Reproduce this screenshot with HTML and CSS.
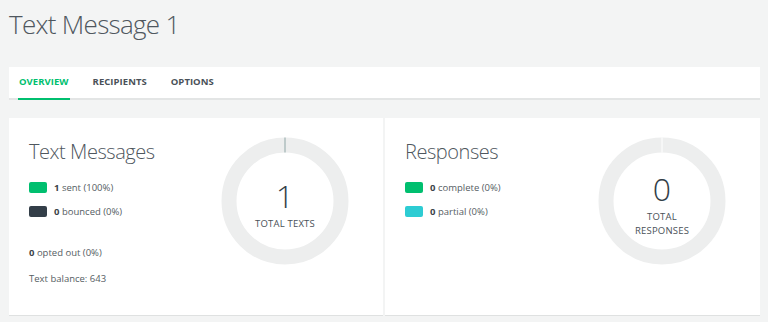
FILE: index.html
```html
<!DOCTYPE html>
<html>
<head>
<meta charset="utf-8">
<link rel="stylesheet" href="styles.css">
</head>
<body>
<div class="page">
  <h1 class="title">Text Message 1</h1>
  <nav class="tabs">
    <a class="tab active">OVERVIEW</a>
    <a class="tab">RECIPIENTS</a>
    <a class="tab">OPTIONS</a>
  </nav>
  <div class="cards">
    <section class="card">
      <div class="info">
        <h2 class="card-title">Text Messages</h2>
        <ul class="legend">
          <li><span class="swatch green"></span><b>1</b>&nbsp;sent (100%)</li>
          <li><span class="swatch dark"></span><b>0</b>&nbsp;bounced (0%)</li>
        </ul>
        <p class="stat"><b>0</b> opted out (0%)</p>
        <p class="stat">Text balance: 643</p>
      </div>
      <div class="donut">
        <svg width="128" height="128" viewBox="0 0 128 128">
          <circle cx="64" cy="64" r="56" fill="none" stroke="#edeeee" stroke-width="15"/>
          <line x1="64" y1="0.5" x2="64" y2="15.5" stroke="#8fa6a6" stroke-width="1"/>
        </svg>
        <div class="donut-label">
          <span class="num">1</span>
          <span class="cap">TOTAL TEXTS</span>
        </div>
      </div>
    </section>
    <section class="card">
      <div class="info">
        <h2 class="card-title">Responses</h2>
        <ul class="legend">
          <li><span class="swatch green"></span><b>0</b>&nbsp;complete (0%)</li>
          <li><span class="swatch teal"></span><b>0</b>&nbsp;partial (0%)</li>
        </ul>
      </div>
      <div class="donut">
        <svg width="128" height="128" viewBox="0 0 128 128">
          <circle cx="64" cy="64" r="56" fill="none" stroke="#edeeee" stroke-width="15"/>
          <line x1="64" y1="0.5" x2="64" y2="15.5" stroke="#ffffff" stroke-width="1"/>
        </svg>
        <div class="donut-label">
          <span class="num">0</span>
          <span class="cap">TOTAL<br>RESPONSES</span>
        </div>
      </div>
    </section>
  </div>
</div>
</body>
</html>
```

FILE: styles.css
```css
* { box-sizing: border-box; }
html, body { margin: 0; padding: 0; }
body {
  background: #f3f4f4;
  font-family: "Open Sans", "Noto Sans", sans-serif;
  color: #4a5158;
  width: 768px;
  height: 322px;
  overflow: hidden;
}
.page {
  padding: 6px 8px 0 9px;
}
.title {
  margin: 0;
  font-size: 26px;
  font-weight: 300;
  line-height: 36px;
  color: #4f575e;
  letter-spacing: -0.7px;
}
.tabs {
  margin-top: 25px;
  background: #fff;
  height: 33px;
  border-bottom: 2px solid #e3e5e5;
  display: flex;
  padding-left: 9px;
}
.tab {
  display: block;
  font-size: 9.5px;
  font-weight: 700;
  letter-spacing: 0.05px;
  color: #4a5158;
  padding: 0 1px;
  line-height: 30px;
  margin-right: 22px;
  height: 33px;
}
.tab.active {
  color: #00bf6f;
  border-bottom: 2px solid #00bf6f;
}
.cards {
  margin-top: 18px;
  display: flex;
  gap: 2px;
}
.card {
  background: #fff;
  height: 197px;
  display: flex;
  box-shadow: 0 1px 0 #dfe1e1;
}
.card:first-child { flex: 0 0 374px; }
.card:last-child { flex: 0 0 375px; }
.info {
  flex: 1;
  padding: 20px 0 0 20px;
}
.card-title {
  margin: 0;
  font-size: 20px;
  font-weight: 300;
  line-height: 28px;
  color: #4f575e;
  letter-spacing: -0.45px;
}
.legend {
  list-style: none;
  margin: 15px 0 0 0;
  padding: 0;
}
.legend li {
  display: flex;
  align-items: center;
  font-size: 9.5px;
  height: 12px;
  margin-bottom: 12px;
  color: #555d63;
}
.legend li:last-child { margin-bottom: 0; }
.legend b { font-weight: 700; color: #3b434a; }
.swatch {
  width: 18px;
  height: 11px;
  border-radius: 2px;
  margin-right: 7px;
}
.swatch.green { background: #00bf6f; }
.swatch.dark { background: #333e48; }
.swatch.teal { background: #2dccd3; }
.stat {
  margin: 0;
  font-size: 9.5px;
  color: #555d63;
  line-height: 12px;
}
.legend + .stat { margin-top: 30px; }
.stat + .stat { margin-top: 14px; }
.stat b { font-weight: 700; color: #3b434a; }
.donut {
  position: relative;
  width: 128px;
  height: 128px;
  margin: 19px 34px 0 0;
}
.donut svg { display: block; }
.donut-label {
  position: absolute;
  left: 0; top: 0; right: 0; bottom: 0;
  padding-top: 8px;
  display: flex;
  flex-direction: column;
  align-items: center;
  justify-content: center;
  text-align: center;
}
.num {
  font-size: 32px;
  font-weight: 300;
  line-height: 34px;
  color: #333e48;
}
.cap {
  font-size: 9.5px;
  color: #4a5158;
  letter-spacing: 0.2px;
  line-height: 14px;
  margin-top: 4px;
}
```
